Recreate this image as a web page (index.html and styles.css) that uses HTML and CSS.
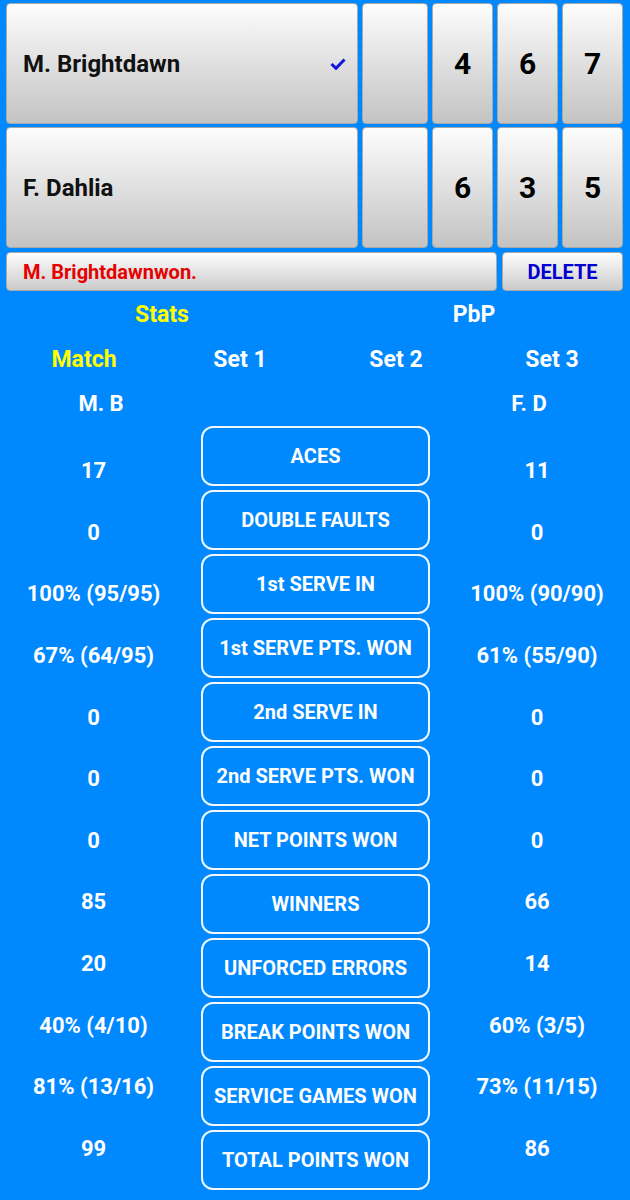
FILE: index.html
```html
<!DOCTYPE html>
<html>
<head>
<meta charset="utf-8">
<link rel="stylesheet" href="styles.css">
</head>
<body>
<div class="board">
  <div class="row">
    <div class="btn name"><span>M. Brightdawn</span><svg class="check" width="16" height="12" viewBox="0 0 16 12"><polyline points="1.5,6 6,10.3 14.5,1.5" fill="none" stroke="#1414e0" stroke-width="3" stroke-linecap="butt" stroke-linejoin="miter"/></svg></div>
    <div class="btn serve"></div>
    <div class="btn score">4</div>
    <div class="btn score">6</div>
    <div class="btn score">7</div>
  </div>
  <div class="row second">
    <div class="btn name"><span>F. Dahlia</span></div>
    <div class="btn serve"></div>
    <div class="btn score">6</div>
    <div class="btn score">3</div>
    <div class="btn score">5</div>
  </div>
  <div class="status-row">
    <div class="btn status">M. Brightdawnwon.</div>
    <div class="btn delete">DELETE</div>
  </div>
</div>
<div class="tabs">
  <div class="active">Stats</div>
  <div>PbP</div>
</div>
<div class="periods">
  <div class="active">Match</div>
  <div>Set 1</div>
  <div>Set 2</div>
  <div>Set 3</div>
</div>
<div class="players">
  <div>M. B</div>
  <div></div>
  <div>F. D</div>
</div>
<div class="stats">
  <div class="vals">
    <div>17</div>
    <div>0</div>
    <div>100% (95/95)</div>
    <div>67% (64/95)</div>
    <div>0</div>
    <div>0</div>
    <div>0</div>
    <div>85</div>
    <div>20</div>
    <div>40% (4/10)</div>
    <div>81% (13/16)</div>
    <div>99</div>
  </div>
  <div class="labels">
    <div class="label">ACES</div>
    <div class="label">DOUBLE FAULTS</div>
    <div class="label">1st SERVE IN</div>
    <div class="label">1st SERVE PTS. WON</div>
    <div class="label">2nd SERVE IN</div>
    <div class="label">2nd SERVE PTS. WON</div>
    <div class="label">NET POINTS WON</div>
    <div class="label">WINNERS</div>
    <div class="label">UNFORCED ERRORS</div>
    <div class="label">BREAK POINTS WON</div>
    <div class="label">SERVICE GAMES WON</div>
    <div class="label">TOTAL POINTS WON</div>
  </div>
  <div class="vals">
    <div>11</div>
    <div>0</div>
    <div>100% (90/90)</div>
    <div>61% (55/90)</div>
    <div>0</div>
    <div>0</div>
    <div>0</div>
    <div>66</div>
    <div>14</div>
    <div>60% (3/5)</div>
    <div>73% (11/15)</div>
    <div>86</div>
  </div>
</div>
</body>
</html>
```
FILE: styles.css
```css
html, body {
  margin: 0;
  padding: 0;
}
body {
  background: #0088ff;
  font-family: Roboto, "Liberation Sans", sans-serif;
  font-weight: 700;
  width: 630px;
  height: 1200px;
  overflow: hidden;
  color: #fff;
}
.board {
  padding: 3px 7px 0 6px;
}
.row {
  display: grid;
  grid-template-columns: 352px 66px 61px 61px 61px;
  column-gap: 4px;
  height: 121px;
}
.row.second {
  margin-top: 3px;
}
.btn {
  box-sizing: border-box;
  border: 1px solid #a8a8a8;
  border-radius: 4px;
  background: linear-gradient(#fdfdfd, #c3c3c3);
  color: #000;
}
.name {
  display: flex;
  align-items: center;
  justify-content: space-between;
  padding: 0 11px 0 16px;
  font-size: 24px;
  color: #111;
}
.check {
  display: block;
}
.score {
  display: flex;
  align-items: center;
  justify-content: center;
  font-size: 30px;
}
.status-row {
  display: grid;
  grid-template-columns: 491px 121px;
  column-gap: 5px;
  height: 39px;
  margin-top: 4px;
}
.status-row .btn {
  background: linear-gradient(#fdfdfd, #cbcbcb);
}
.status {
  display: flex;
  align-items: center;
  padding-left: 16px;
  font-size: 20px;
  color: #e60000;
}
.delete {
  display: flex;
  align-items: center;
  justify-content: center;
  font-size: 20px;
  color: #0000d0;
}
.tabs {
  display: grid;
  grid-template-columns: 1fr 1fr;
  padding-left: 6px;
  height: 46px;
  align-items: center;
  text-align: center;
  font-size: 23px;
}
.periods {
  display: grid;
  grid-template-columns: repeat(4, 1fr);
  padding-left: 6px;
  height: 45px;
  align-items: center;
  text-align: center;
  font-size: 23px;
}
.active {
  color: #ffff00;
}
.players {
  display: grid;
  grid-template-columns: 202px 226px 202px;
  height: 42px;
  align-items: center;
  text-align: center;
  font-size: 22px;
}
.stats {
  display: grid;
  grid-template-columns: 187px 1fr 186px;
}
.vals {
  padding-top: 16px;
  font-size: 22px;
}
.vals div {
  height: 61.6px;
  display: flex;
  align-items: center;
  justify-content: center;
}
.labels {
  padding: 2px 14px 0;
}
.label {
  box-sizing: border-box;
  height: 60px;
  margin-bottom: 4px;
  border: 2px solid #f2f8ff;
  border-radius: 12px;
  display: flex;
  align-items: center;
  justify-content: center;
  font-size: 20px;
  white-space: nowrap;
}
```
